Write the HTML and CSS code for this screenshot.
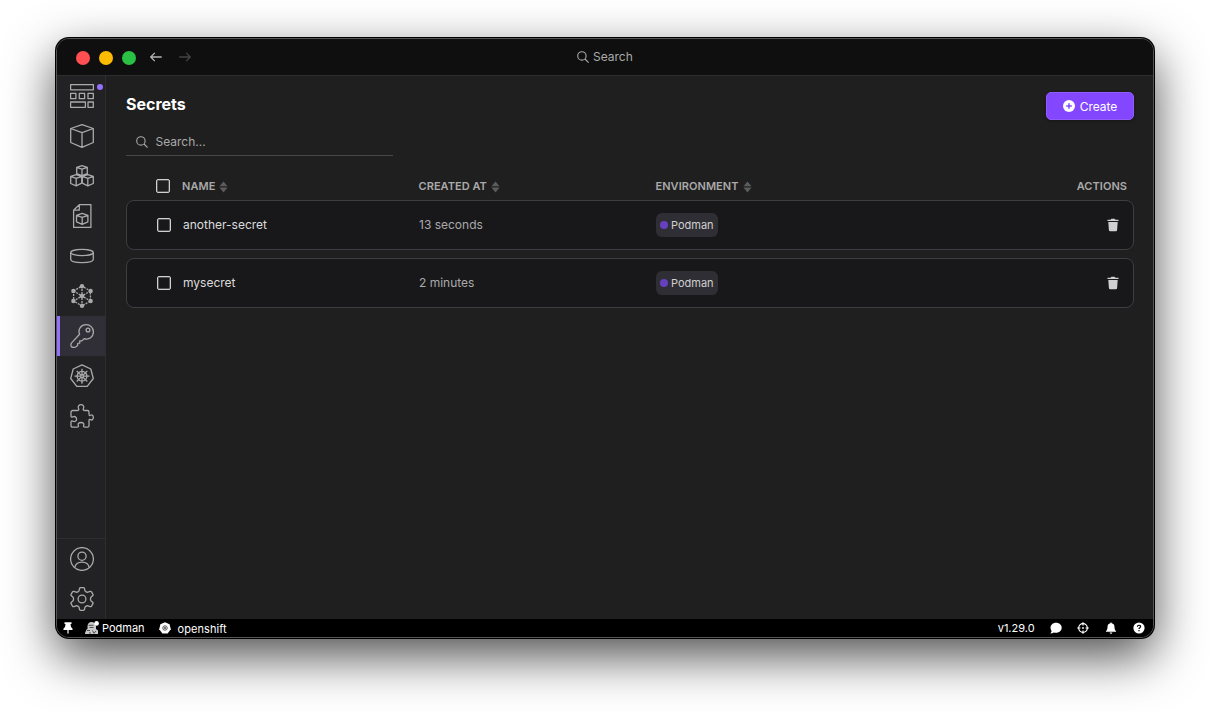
FILE: index.html
```html
<!DOCTYPE html>
<html lang="en">
<head>
  <meta charset="UTF-8">
  <title>Secrets</title>
  <link rel="stylesheet" href="styles.css">
</head>
<body>

<!-- shared icon shapes -->
<svg class="defs">
  <symbol id="search" viewBox="0 0 12 12"><circle cx="4.9" cy="4.9" r="4.2"/><path d="M8 8l3.6 3.6"/></symbol>
  <symbol id="sort" viewBox="0 0 8 12"><path d="M4 .4 8 5.300H0zM4 11.400 0 6.500h8z"/></symbol>
  <symbol id="trash" viewBox="0 0 12 14"><path d="M.5 1.800h3L4.500.8h3l1 1h3V3H.5zM1.300 4h9.400l-.6 8q-.1 1.200-1.300 1.200H3.200Q2 13.200 1.900 12z"/></symbol>
  <symbol id="cube" viewBox="0 0 24 24"><path d="M12 .7 23.300 4.500v14L12 23.300.7 18.500v-14zM.7 4.500 12 8.700l11.300-4.200M12 8.700v14.600"/></symbol>
</svg>

<div class="window">
  <header class="titlebar">
    <span class="light red"></span>
    <span class="light yellow"></span>
    <span class="light green"></span>
    <svg class="arrow back" viewBox="0 0 12 10"><path d="M11.700 5H.8M4.800.9.7 5l4.100 4.100"/></svg>
    <svg class="arrow forward" viewBox="0 0 12 10"><path d="M.3 5h10.900M7.200.9 11.300 5 7.200 9.100"/></svg>
    <div class="title-search"><svg class="icon-search"><use href="#search"/></svg>Search</div>
  </header>

  <div class="content">
    <nav class="sidebar">
      <a class="item">
        <svg viewBox="0 0 24 24"><path d="M.6.600h22.800v5.200H.6zM.6 9.400h5.300v5.300H.6zM9.300 9.400h5.300v5.300H9.300zM18 9.400h5.300v5.300H18zM.6 18h14.800v5.300H.6zM18 18h5.300v5.300H18z"/></svg>
        <span class="dot"></span>
      </a>
      <a class="item"><svg><use href="#cube"/></svg></a>
      <a class="item">
        <svg viewBox="0 0 24 24"><path d="M12 1.700 17.300 3.300v6.400L12 11.600 6.700 9.700V3.300zM6.700 3.300 12 5.100l5.300-1.800M12 5.100v6.500M6.200 10.700 11.700 12.400v6.800L6.200 21.800.7 19.500v-7.100zM.7 12.400l5.500 1.900 5.500-1.900M6.200 14.300v7.500M17.800 10.700l5.500 1.700v7.100l-5.500 2.300-5.500-2.600v-6.800zM12.300 12.400l5.500 1.900 5.500-1.900M17.800 14.300v7.500"/></svg>
      </a>
      <a class="item">
        <svg viewBox="0 0 24 24"><path d="M9.300.600h11.600v22.800H3.600V6.200zM9.300.600v5.600H3.600M12.200 9.300l5.700 2.100v6.400l-5.700 2.600-5.700-2.600v-6.400zM6.500 11.400l5.700 2 5.700-2M12.200 13.400v7"/></svg>
      </a>
      <a class="item">
        <svg viewBox="0 0 24 24"><ellipse cx="12" cy="8.500" rx="11.300" ry="3.100"/><path d="M.7 8.500v6.700c0 4.500 22.600 4.500 22.600 0V8.500"/></svg>
      </a>
      <a class="item">
        <svg viewBox="0 0 24 24">
          <path class="dashed" d="M12 2v20M3.600 7v10L12 22l8.400-5V7L12 2zM3.600 7l16.800 10M20.400 7 3.600 17"/>
          <g class="solid"><circle cx="12" cy="2.200" r="2.200"/><circle cx="12" cy="12" r="2.300"/><circle cx="12" cy="21.800" r="2.200"/><circle cx="3.400" cy="7" r="2.200"/><circle cx="20.600" cy="7" r="2.200"/><circle cx="3.400" cy="17" r="2.200"/><circle cx="20.600" cy="17" r="2.200"/></g>
        </svg>
      </a>
      <a class="item active">
        <svg viewBox="0 0 24 24"><circle cx="18" cy="6" r="1.900"/><path d="M9.600 10.300C7.500 5 11.200.7 16 .7c4.600 0 7.400 3.300 7.400 7.300 0 5-4.400 8.300-9.200 6.600l-2.300 2.300H9.700v2.300l-1.900.2-.2 2-1.600 1.300c-1.200.9-3.800.9-4.500.1-.9-.8-.8-2.900.1-3.900z"/></svg>
      </a>
      <a class="item">
        <svg viewBox="0 0 24 24">
          <path d="M12 .800 20.800 5l2.500 9.500-6.100 7.900H6.800L.7 14.500 3.200 5z"/>
          <circle cx="12" cy="12.200" r="4.900"/><circle cx="12" cy="12.200" r="1.300"/>
          <path d="M12 4.700v6.200M12 13.500v6.200M4.500 12.200h6.200M13.300 12.200h6.200M6.700 6.900l4.400 4.400M12.900 13.100l4.400 4.400M17.300 6.900l-4.400 4.400M11.100 13.100l-4.400 4.400"/>
        </svg>
      </a>
      <a class="item">
        <svg viewBox="0 0 24 24"><path d="M2.800 6.500h4.400c1.600 0 1.900-.9 1.400-1.900C7.500 2.500 8.900.7 11 .7s3.500 1.800 2.400 3.900c-.5 1-.2 1.900 1.400 1.900h2.700q1.500 0 1.500 1.500v2c0 1.600.7 1.900 1.600 1.300 1.500-1 2.700.2 2.700 2.100s-1.200 3.200-2.700 2.200c-.9-.6-1.600-.3-1.600 1.200v4.600q0 1.800-1.500 1.800h-2.300c-1.700 0-2-.8-1.500-1.800.8-1.700-.7-2.900-2.700-2.900s-3.500 1.200-2.700 2.900c.5 1 .2 1.800-1.500 1.800h-4q-1.800 0-1.800-1.800v-2.900c0-1.400.7-1.800 1.700-1.300 2.100 1 3.900-.1 3.900-2.100s-1.800-3.200-3.900-2.200c-1 .5-1.700.2-1.700-1.200V8q0-1.500 1.800-1.500z"/></svg>
      </a>
      <div class="bottom">
        <a class="item"><svg viewBox="0 0 24 24"><circle cx="12" cy="12" r="11.400"/><circle cx="12" cy="9.200" r="4.100"/><path d="M4.800 20.600c.6-4 3.500-5.500 7.200-5.500s6.600 1.500 7.200 5.500"/></svg></a>
        <a class="item"><svg viewBox="0 0 24 24"><circle cx="12" cy="12" r="3.900"/><path d="M10.600.700h2.800q.9 0 1.100.9l.5 2.300c.7.900 1.800 1.500 2.900 1.300l2.200-.8q.9-.3 1.400.5l1.400 2.400q.4.800-.3 1.400l-1.700 1.500c-.5 1.100-.5 2.500 0 3.600l1.700 1.500q.7.600.3 1.400l-1.400 2.400q-.5.800-1.400.5l-2.200-.8c-1.100-.2-2.200.4-2.900 1.300l-.5 2.300q-.2.900-1.100.9h-2.800q-.9 0-1.100-.9L9 20.100c-.7-.9-1.800-1.500-2.900-1.300l-2.200.8q-.9.3-1.400-.5l-1.400-2.400q-.4-.8.3-1.400l1.700-1.500c.5-1.100.5-2.500 0-3.600L1.400 8.700Q.7 8.100 1.100 7.300l1.400-2.400q.5-.8 1.400-.5l2.200.8C7.200 5.400 8.300 4.800 9 3.900l.5-2.300q.2-.9 1.100-.9z"/></svg></a>
      </div>
    </nav>

    <main class="page">
      <div class="page-head">
        <h1>Secrets</h1>
        <button class="create"><svg viewBox="0 0 12 12"><circle cx="6" cy="6" r="6"/><path d="M6 3.200v5.600M3.200 6h5.600"/></svg>Create</button>
      </div>
      <div class="filter"><svg class="icon-search"><use href="#search"/></svg>Search...</div>

      <div class="row table-head">
        <span class="checkbox"></span>
        <span>NAME<svg class="sort"><use href="#sort"/></svg></span>
        <span>CREATED AT<svg class="sort"><use href="#sort"/></svg></span>
        <span>ENVIRONMENT<svg class="sort"><use href="#sort"/></svg></span>
        <span class="actions">ACTIONS</span>
      </div>
      <div class="row card">
        <span class="checkbox"></span>
        <span class="name">another-secret</span>
        <span class="age">13 seconds</span>
        <span><span class="badge">Podman</span></span>
        <span class="actions"><svg class="trash"><use href="#trash"/></svg></span>
      </div>
      <div class="row card">
        <span class="checkbox"></span>
        <span class="name">mysecret</span>
        <span class="age">2 minutes</span>
        <span><span class="badge">Podman</span></span>
        <span class="actions"><svg class="trash"><use href="#trash"/></svg></span>
      </div>
    </main>
  </div>

  <footer class="statusbar">
    <svg class="pin" viewBox="0 0 10 12"><path d="M1.500.3h7v1.600h-1L8 5q1.700.9 1.700 2.900H.3Q.3 5.900 2 5l.5-3.100h-1zM4.400 7.900h1.200v3.600H4.400z"/></svg>
    <svg class="podman" viewBox="0 0 16 14">
      <path fill="#c9c9c9" d="M3.500 5Q4 1 7.500 1T12 5v3l2 1.500V13H1v-1l1.500-3.500 1-.5z"/>
      <path fill="none" stroke="#333" stroke-width=".8" d="M4.500 4.300h5M5.500 6.500h4M3 9.500h3M5 12h2M8.500 9.500l1.500 2.800 2-2.300"/>
      <circle cx="12.600" cy="2.400" r="2.300"/>
    </svg>
    <span class="engine">Podman</span>
    <svg class="kube" viewBox="0 0 12 12"><path d="M6 .2 10.600 2.300 11.800 7.200 8.600 11.500H3.400L.2 7.200 1.400 2.300z"/><g fill="none" stroke="#555" stroke-width=".6"><circle cx="6" cy="6" r="2.300"/><path d="M6 3v6M3 6h6M4 4l4 4M8 4 4 8"/></g></svg>
    <span class="context">openshift</span>
    <span class="version">v1.29.0</span>
    <svg class="tool" viewBox="0 0 12 12"><path d="M6.100.800c3.200 0 5.600 2.200 5.600 5s-2.400 5-5.600 5c-.8 0-1.600-.1-2.300-.4C2.900 11 1.700 11.400.3 11.400c.7-.8 1.200-1.700 1.300-2.500C.9 8 .500 7 .500 5.800c0-2.800 2.400-5 5.600-5z"/></svg>
    <svg class="tool" viewBox="0 0 12 12"><g fill="none" stroke="#fff" stroke-width="1.200"><circle cx="6" cy="6" r="4.300"/><path d="M6 .2v3.300M6 8.500v3.300M.2 6h3.300M8.500 6h3.300"/></g><circle cx="6" cy="6" r=".9"/></svg>
    <svg class="tool" viewBox="0 0 12 12"><path d="M5.400.400h1.200v.9C8.700 1.600 9.500 3.200 9.500 5c0 2.300.6 3.200 1.600 4.200v.6H.9v-.6c1-1 1.600-1.900 1.600-4.200 0-1.800.8-3.400 2.900-3.700zM4.600 10.400h2.800Q7.200 11.700 6 11.700t-1.400-1.300z"/></svg>
    <svg class="tool" viewBox="0 0 12 12"><circle cx="6" cy="6" r="5.600"/><path fill="none" stroke="#000" stroke-width="1.200" d="M4.400 4.700C4.400 2.800 7.600 2.800 7.600 4.600 7.600 5.700 6 5.700 6 7M6 8v1.300"/></svg>
  </footer>
</div>

</body>
</html>
```
FILE: styles.css
```css
* {
  box-sizing: border-box;
}
body {
  margin: 0;
  padding: 38px 56px 0;
  height: 712px;
  overflow: hidden;
  background: #fff;
  font-family: Inter, sans-serif;
  font-size: 12px;
  color: #aaa;
}
svg {
  display: block;
  flex-shrink: 0;
}
.defs {
  display: none;
}
.window {
  width: 1098px;
  height: 600px;
  border: 1px solid #555;
  border-radius: 13px;
  overflow: hidden;
  display: flex;
  flex-direction: column;
  background: #000;
  box-shadow: 0 0 0 1px #000, 0 18px 50px rgba(0, 0, 0, 0.7);
}

/* title bar */
.titlebar {
  position: relative;
  height: 37px;
  flex-shrink: 0;
  display: flex;
  align-items: center;
  padding-left: 19px;
  background: #0f0f0f;
  border-bottom: 1px solid #2d2d2f;
}
.light {
  width: 14px;
  height: 14px;
  margin: 2px 9px 0 0;
  border-radius: 50%;
}
.red { background: #ff4f52; }
.yellow { background: #fdbc02; }
.green { background: #2ac043; }
.arrow {
  width: 12px;
  height: 10px;
  fill: none;
  stroke: #b4b4b4;
  stroke-width: 1.3;
}
.back { margin-left: 5px; }
.forward {
  margin-left: 17px;
  stroke: #444;
}
.title-search {
  position: absolute;
  left: 520px;
  top: 10px;
  display: flex;
  align-items: center;
  gap: 4px;
  line-height: 16px;
}
.icon-search {
  width: 12px;
  height: 12px;
  fill: none;
  stroke: #aaa;
  stroke-width: 1.1;
}

/* sidebar */
.content {
  flex: 1;
  display: flex;
}
.sidebar {
  width: 49px;
  display: flex;
  flex-direction: column;
  background: #222224;
  border-right: 1px solid #2e2e32;
}
.item {
  position: relative;
  height: 40px;
  display: flex;
  align-items: center;
  justify-content: center;
  padding-left: 2px;
}
.item svg {
  width: 24px;
  height: 24px;
  fill: none;
  stroke: #aaa;
  stroke-width: 1.3;
  stroke-linejoin: round;
}
.item .solid {
  fill: #aaa;
  stroke: none;
}
.item .dashed {
  stroke-dasharray: 2 1;
}
.active {
  background: #302e36;
  border-left: 3px solid #9470ff;
  padding-right: 1px;
  padding-left: 0;
}
.dot {
  position: absolute;
  left: 40px;
  top: 8px;
  width: 6px;
  height: 6px;
  border-radius: 50%;
  background: #9470ff;
}
.bottom {
  margin-top: auto;
  border-top: 1px solid #2e2e32;
}

/* secrets list */
.page {
  flex: 1;
  padding: 16px 19px 0 20px;
  background: #1f1f1f;
}
.page-head {
  display: flex;
  justify-content: space-between;
}
h1 {
  margin: 2px 0 0;
  font-size: 16px;
  line-height: 20px;
  color: #fff;
}
.create {
  width: 88px;
  height: 28px;
  display: flex;
  align-items: center;
  justify-content: center;
  gap: 5px;
  padding: 0;
  border: 1px solid #935bff;
  border-radius: 5px;
  background: #8347ff;
  color: #fff;
  font: 12px Inter, sans-serif;
  box-shadow: 0 1px 3px rgba(0, 0, 0, 0.3);
}
.create svg {
  width: 12px;
  height: 12px;
  fill: #fff;
  stroke: #8347ff;
  stroke-width: 1.5;
}
.create circle {
  stroke: none;
}
.filter {
  width: 267px;
  height: 28px;
  margin-top: 8px;
  padding-left: 10px;
  display: flex;
  align-items: center;
  gap: 7.5px;
  border-bottom: 1px solid #484848;
}
.row {
  display: grid;
  grid-template-columns: 26px 236.5px 237px 1fr auto;
  align-items: center;
}
.table-head {
  height: 28px;
  margin-top: 16px;
  padding: 0 7px 0 30px;
  font-size: 11px;
  font-weight: 600;
  letter-spacing: 0.05px;
}
.card {
  grid-template-columns: 26px 236px 237px 1fr auto;
  height: 50px;
  margin-bottom: 8px;
  padding: 0 14px 0 30px;
  border: 1px solid #3e3e42;
  border-radius: 8px;
  background: #18181a;
}
.checkbox {
  width: 14px;
  height: 14px;
  border: 1.5px solid #d0d0d0;
  border-radius: 2px;
  box-shadow: inset 0 0 0 0.5px #8a8a8a;
}
.sort {
  display: inline-block;
  width: 9px;
  height: 12px;
  margin-left: 4px;
  vertical-align: -3px;
  fill: #5c5c5c;
}
.name {
  color: #dcdcdc;
}
.name,
.age {
  padding-bottom: 2px;
}
.badge {
  display: inline-flex;
  align-items: center;
  gap: 3px;
  width: 62px;
  height: 24px;
  padding-left: 4px;
  border-radius: 6px;
  background: #2f2e34;
  color: #d0d0d0;
  font-size: 11px;
}
.badge::before {
  content: "";
  width: 8px;
  height: 8px;
  border-radius: 50%;
  background: #6740c0;
}
.trash {
  width: 12px;
  height: 14px;
  fill: #d0d0d0;
}

/* status bar */
.statusbar {
  height: 18px;
  display: flex;
  align-items: center;
  padding: 0 8px 0 6px;
  background: #000;
  color: #fff;
  font-size: 11px;
}
.statusbar svg {
  fill: #fff;
}
.pin {
  width: 10px;
  height: 12px;
}
.statusbar .podman {
  width: 16px;
  height: 14px;
  margin: 0 2px 0 11px;
}
.kube {
  width: 12px;
  height: 12px;
  margin: 0 7px 0 14px;
}
.context {
  padding-top: 1px;
  letter-spacing: 0.06px;
}
.version {
  margin-left: auto;
}
.tool {
  width: 12px;
  height: 12px;
  margin-left: 15.800px;
}
.version + .tool {
  margin-left: 15px;
}
```
